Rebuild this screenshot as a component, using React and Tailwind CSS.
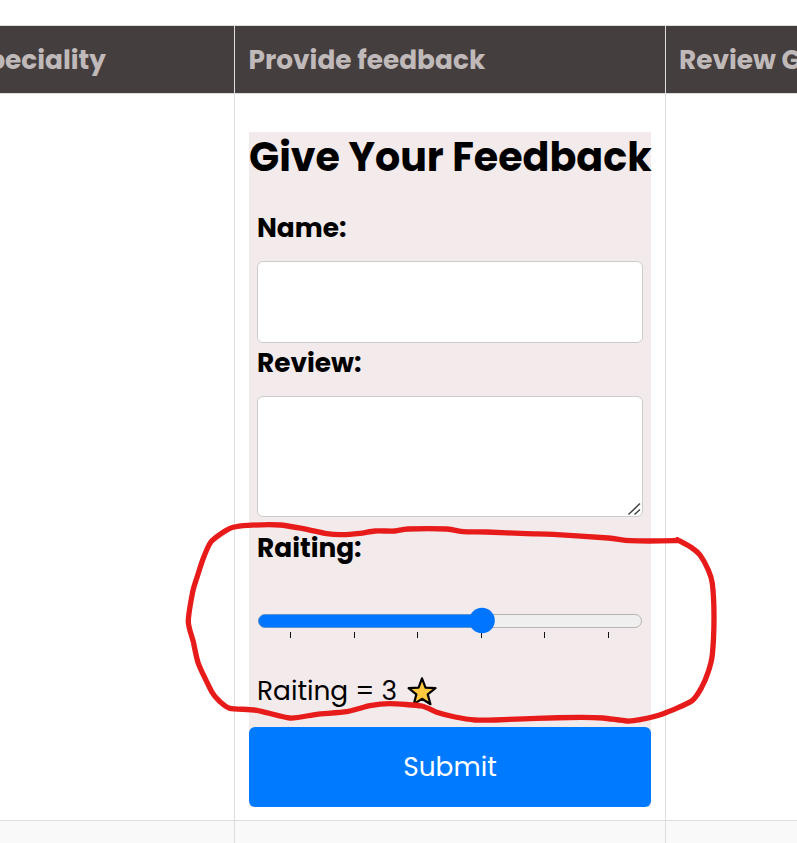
const ticks = [290, 354, 417, 481, 544, 608];

const markerPoints = [
  [677.3, 539.7], [675, 540.7], [630, 540.7], [608.3, 538], [553.3, 534.3], [526.7, 533.7], [486.7, 532],
  [463.3, 531.7], [446.7, 529], [408, 529], [395, 531], [375, 531], [360, 533.3], [341.7, 534.7],
  [326.7, 533.7], [303, 528.7], [280, 525], [248, 525.3], [233, 527.3], [221.7, 533.3], [210.7, 542.3],
  [203.3, 558.3], [196.7, 578.3], [192.7, 591.7], [188.3, 621.7], [193.3, 641.7], [198.3, 663.3],
  [211.7, 691.7], [220, 701.7], [230, 708.3], [256.7, 710.3], [290, 718], [316.7, 714.3], [346.7, 711.7],
  [370, 705.7], [390, 703.7], [421.7, 706], [436.7, 712.3], [455, 717], [475, 720], [495, 720],
  [536.7, 718.3], [580, 717.3], [603, 718], [626.7, 721], [640, 719.7], [663.3, 713.7], [691.7, 701],
  [701.7, 687.3], [708.3, 671.7], [712.3, 655], [714, 616.7], [712.3, 583.3], [708.3, 570], [700, 555],
  [691.7, 547.7], [677.3, 539.7],
];

// Catmull-Rom spline through the points, written as cubic Béziers
function smoothPath(points) {
  let d = `M${points[0][0]} ${points[0][1]}`;
  for (let i = 0; i < points.length - 1; i++) {
    const p0 = points[Math.max(i - 1, 0)];
    const p1 = points[i];
    const p2 = points[i + 1];
    const p3 = points[Math.min(i + 2, points.length - 1)];
    const k = 9;
    d += `C${p1[0] + (p2[0] - p0[0]) / k} ${p1[1] + (p2[1] - p0[1]) / k} ${p2[0] - (p3[0] - p1[0]) / k} ${p2[1] - (p3[1] - p1[1]) / k} ${p2[0]} ${p2[1]}`;
  }
  return d;
}

function HeaderCell({ children, className = "" }) {
  return (
    <div className={`h-[67px] overflow-hidden whitespace-nowrap bg-[#453e3e] text-[26.4px] leading-[67px] font-bold text-[#c0b9b9] ${className}`}>
      {children}
    </div>
  );
}

function Label({ children, className = "" }) {
  return <label className={`block h-[39px] pl-2 text-[26.4px] leading-[39px] font-bold whitespace-nowrap ${className}`}>{children}</label>;
}

function Slider() {
  return (
    <svg className="block h-[40px] w-[402px]" viewBox="249 603 402 40">
      <rect x="258.5" y="614.5" width="383" height="13" rx="6.5" fill="#efefef" stroke="#b6b4b4" />
      <path d="M482 614.5H265a6.5 6.5 0 0 0 0 13H482z" fill="#0075ff" stroke="#5d92cd" strokeWidth=".7" />
      {ticks.map((x) => (
        <rect key={x} x={x} y="632" width="1" height="6" fill="#101010" />
      ))}
      <circle cx="482" cy="620.5" r="12.8" fill="#0075ff" />
    </svg>
  );
}

function Star() {
  return (
    <svg className="ml-[10px] h-[30px] w-[30px]" viewBox="407 676 30 30">
      <path
        d="M422 678.3L425.5 687.7L435.5 688.2L427.7 694.4L430.5 704.2L422 698.8L413.7 704.2L416.4 694.4L408.6 688.2L418.6 687.7Z"
        fill="#ffc83d"
        stroke="#000"
        strokeWidth="2.2"
        strokeLinejoin="round"
      />
    </svg>
  );
}

function FeedbackForm() {
  return (
    <div className="flex h-[675px] w-[402px] flex-col bg-[#f3eaeb] text-black">
      <h1 className="mb-[26px] h-[50px] text-[39.6px] leading-[50px] font-bold whitespace-nowrap">Give Your Feedback</h1>
      <Label>Name:</Label>
      <div className="mx-2 mt-[14px] h-[82px] rounded-[6px] border border-[#ccc] bg-white" />
      <Label>Review:</Label>
      <div className="mx-2 mt-[14px] flex h-[121px] items-end justify-end rounded-[6px] border border-[#ccc] bg-white">
        <svg className="h-[15px] w-[16px]" viewBox="626 501 16 15" fill="none" stroke="#444" strokeWidth="1.5">
          <path d="M628.5 514.5L640 503.5M634.5 514.5L640 509.5" />
        </svg>
      </div>
      <Label className="mt-[11px]">Raiting:</Label>
      <div className="mt-[36px]">
        <Slider />
      </div>
      <div className="mt-[28px] flex h-[39px] items-center pl-2 text-[26.4px] leading-[39px] whitespace-nowrap">
        <span>Raiting = 3</span>
        <Star />
      </div>
      <button className="mt-[17px] h-[80px] w-full rounded-[6px] bg-[#007bff] text-center text-[26.4px] leading-[80px] text-white">
        <span>Submit</span>
      </button>
    </div>
  );
}

export default function App() {
  return (
    <div className="relative h-[843px] w-[797px] overflow-hidden bg-white pt-[25px] font-['Poppins','Inter',sans-serif]">
      <div className="grid grid-cols-[234px_431px_132px] border-y border-[#ddd]">
        <HeaderCell className="flex justify-end pr-[128px]">
          <span>Speciality</span>
        </HeaderCell>
        <HeaderCell className="border-l border-[#ddd] pl-[13.5px]">Provide feedback</HeaderCell>
        <HeaderCell className="border-l border-[#ddd] pl-[13px]">Review Given</HeaderCell>
      </div>
      <div className="grid h-[727px] grid-cols-[234px_431px_132px] border-b border-[#ddd]">
        <div />
        <div className="border-l border-[#ddd] pt-[38px] pl-[14px]">
          <FeedbackForm />
        </div>
        <div className="border-l border-[#ddd]" />
      </div>
      <div className="grid h-[22px] grid-cols-[234px_431px_132px] bg-[#f9f9f9]">
        <div />
        <div className="border-l border-[#ddd]" />
        <div className="border-l border-[#ddd]" />
      </div>
      {/* Freehand marker loop around the rating section */}
      <svg className="absolute inset-0 h-[843px] w-[797px]" viewBox="0 0 797 843" fill="none">
        <path d={smoothPath(markerPoints)} stroke="#e81b1b" strokeWidth="5.3" strokeLinecap="round" strokeLinejoin="round" />
      </svg>
    </div>
  );
}
